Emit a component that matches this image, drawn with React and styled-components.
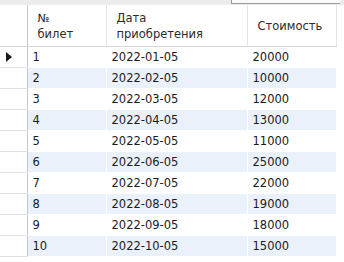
import React from 'react';
import styled, { createGlobalStyle } from 'styled-components';

const GlobalStyle = createGlobalStyle`
  html, body {
    margin: 0;
    padding: 0;
    background: #ffffff;
  }
  body {
    font-family: 'DejaVu Sans', 'Liberation Sans', sans-serif;
  }
`;

const Screen = styled.div`
  width: 344px;
  height: 262px;
  overflow: hidden;
  background: #ffffff;
  display: flex;
  flex-direction: column;
`;

const TopStrip = styled.div`
  height: 5px;
  flex: none;
  display: flex;
  background: #ececec;
`;

const Spacer = styled.div`
  flex: 1;
`;

const TopBox = styled.div`
  width: 108px;
  height: 3px;
  margin-right: 4px;
  background: #fafafa;
  border-left: 1px solid #9a9a9a;
  border-bottom: 1px solid #9a9a9a;
`;

const Table = styled.table`
  border-collapse: collapse;
  table-layout: fixed;
  width: 336px;
  font-size: 11.5px;
  color: #1b1b1b;
`;

const HeadCell = styled.th`
  height: 41px;
  padding: 0;
  padding-left: ${p => (p.$marker ? 0 : 10)}px;
  text-align: left;
  vertical-align: middle;
  font-weight: normal;
  line-height: 16px;
  color: #2b2b2b;
  background: #ffffff;
  border-bottom: 1px solid #d8d8d8;
  border-right: 1px solid ${p => (p.$marker ? '#c6c6c6' : '#e4e4e4')};
`;

const Cell = styled.td`
  height: 20px;
  padding: 0 0 0 5px;
  line-height: 20px;
  white-space: nowrap;
  overflow: hidden;
  background: ${p => (p.$stripe ? '#eaf1fb' : '#ffffff')};
  border-bottom: 1px solid #ffffff;
  border-right: 1px solid #ffffff;
`;

const MarkerCell = styled.td`
  height: 20px;
  padding: 0;
  background: #ffffff;
  border-bottom: 1px solid #e2e2e2;
  border-right: 1px solid #c6c6c6;
`;

const Arrow = styled.div`
  width: 0;
  height: 0;
  margin-left: 6px;
  border-top: 5px solid transparent;
  border-bottom: 5px solid transparent;
  border-left: 6px solid #1a1a1a;
`;

const rows = [
  [1, '2022-01-05', 20000],
  [2, '2022-02-05', 10000],
  [3, '2022-03-05', 12000],
  [4, '2022-04-05', 13000],
  [5, '2022-05-05', 11000],
  [6, '2022-06-05', 25000],
  [7, '2022-07-05', 22000],
  [8, '2022-08-05', 19000],
  [9, '2022-09-05', 18000],
  [10, '2022-10-05', 15000],
];

export default function App() {
  return (
    <Screen>
      <GlobalStyle />
      <TopStrip>
        <Spacer />
        <TopBox />
      </TopStrip>
      <Table>
        <colgroup>
          <col style={{ width: 27 }} />
          <col style={{ width: 79 }} />
          <col style={{ width: 141 }} />
          <col style={{ width: 89 }} />
        </colgroup>
        <thead>
          <tr>
            <HeadCell $marker />
            <HeadCell>№<br />билет</HeadCell>
            <HeadCell>Дата<br />приобретения</HeadCell>
            <HeadCell>Стоимость</HeadCell>
          </tr>
        </thead>
        <tbody>
          {rows.map(([id, date, price], i) => (
            <tr key={id}>
              <MarkerCell>{i === 0 && <Arrow />}</MarkerCell>
              <Cell $stripe={i % 2 === 1}>{id}</Cell>
              <Cell $stripe={i % 2 === 1}>{date}</Cell>
              <Cell $stripe={i % 2 === 1}>{price}</Cell>
            </tr>
          ))}
        </tbody>
      </Table>
    </Screen>
  );
}
